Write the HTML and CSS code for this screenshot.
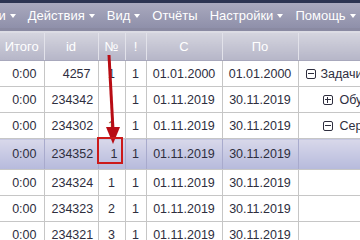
FILE: index.html
```html
<!DOCTYPE html>
<html>
<head>
    <title>Задачи</title>
    <link rel="stylesheet" href="styles.css">
</head>
<body>
    <div class="topline"></div>
    <nav class="menu">
        <span class="menu-item first">Справочники <i class="caret"></i></span>
        <span class="menu-item">Действия <i class="caret"></i></span>
        <span class="menu-item">Вид <i class="caret"></i></span>
        <span class="menu-item">Отчёты</span>
        <span class="menu-item">Настройки <i class="caret"></i></span>
        <span class="menu-item">Помощь <i class="caret"></i></span>
    </nav>
    <div class="menu-gap"></div>

    <table class="grid">
        <colgroup>
            <col class="c-total">
            <col class="c-id">
            <col class="c-num">
            <col class="c-flag">
            <col class="c-date">
            <col class="c-date">
            <col class="c-tree">
        </colgroup>
        <thead>
            <tr>
                <th>Итого</th>
                <th>id</th>
                <th>№</th>
                <th>!</th>
                <th>С</th>
                <th>По</th>
                <th></th>
            </tr>
        </thead>
        <tbody>
            <tr>
                <td class="num">0:00</td>
                <td class="num">4257</td>
                <td class="mid">1</td>
                <td class="mid">1</td>
                <td class="mid">01.01.2000</td>
                <td class="mid">01.01.2000</td>
                <td class="tree"><span class="node"><i class="box minus"></i>Задачи</span></td>
            </tr>
            <tr>
                <td class="num">0:00</td>
                <td class="num">234342</td>
                <td class="mid"></td>
                <td class="mid">1</td>
                <td class="mid">01.11.2019</td>
                <td class="mid">30.11.2019</td>
                <td class="tree"><span class="node sub"><i class="box plus"></i>Обучение</span></td>
            </tr>
            <tr>
                <td class="num">0:00</td>
                <td class="num">234302</td>
                <td class="mid">1</td>
                <td class="mid">1</td>
                <td class="mid">01.11.2019</td>
                <td class="mid">30.11.2019</td>
                <td class="tree"><span class="node sub"><i class="box minus"></i>Сервис</span></td>
            </tr>
            <tr class="selected">
                <td class="num">0:00</td>
                <td class="num">234352</td>
                <td class="num">1</td>
                <td class="mid">1</td>
                <td class="mid">01.11.2019</td>
                <td class="mid">30.11.2019</td>
                <td></td>
            </tr>
            <tr>
                <td class="num">0:00</td>
                <td class="num">234324</td>
                <td class="mid">1</td>
                <td class="mid">1</td>
                <td class="mid">01.11.2019</td>
                <td class="mid">30.11.2019</td>
                <td></td>
            </tr>
            <tr>
                <td class="num">0:00</td>
                <td class="num">234323</td>
                <td class="mid">2</td>
                <td class="mid">1</td>
                <td class="mid">01.11.2019</td>
                <td class="mid">30.11.2019</td>
                <td></td>
            </tr>
            <tr>
                <td class="num">0:00</td>
                <td class="num">234321</td>
                <td class="mid">3</td>
                <td class="mid">1</td>
                <td class="mid">01.11.2019</td>
                <td class="mid">30.11.2019</td>
                <td></td>
            </tr>
        </tbody>
    </table>

    <!-- annotation drawn over the grid -->
    <svg class="marker" width="360" height="240" viewBox="0 0 360 240">
        <line x1="109" y1="55" x2="113" y2="130" stroke="#b80c14" stroke-width="3"/>
        <polygon points="106,127 120,127 113,144" fill="#b80c14"/>
        <rect x="98" y="138" width="24" height="25" fill="none" stroke="#cc1a1a" stroke-width="2"/>
    </svg>
</body>
</html>
```

FILE: styles.css
```css
body {
    margin: 0;
    width: 360px;
    height: 240px;
    overflow: hidden;
    position: relative;
    background: #fff;
    font-family: "Liberation Sans", Arial, sans-serif;
}
.topline {
    height: 3px;
    background: #2c3452;
}
.menu {
    display: flex;
    align-items: center;
    height: 25px;
    margin-left: -79px;
    background: linear-gradient(#a9a9be, #8f90aa);
    border-bottom: 3px solid #8a8aa2;
    white-space: nowrap;
}
.menu-item {
    display: flex;
    align-items: center;
    color: #fff;
    font-size: 13px;
    padding: 0 6px;
}
.caret {
    display: inline-block;
    margin-left: 4px;
    border-left: 3.5px solid transparent;
    border-right: 3.5px solid transparent;
    border-top: 4px solid #fff;
}
.menu-gap {
    height: 2px;
    background: #dcdce4;
}
.grid {
    border-collapse: collapse;
    table-layout: fixed;
    width: 380px;
    font-size: 12.5px;
    color: #2e2e3e;
}
.c-total { width: 44px; }
.c-id { width: 54px; }
.c-num { width: 27px; }
.c-flag { width: 21px; }
.c-date { width: 76px; }
.c-tree { width: 82px; }
.grid th {
    height: 27px;
    padding: 0;
    font-weight: normal;
    font-size: 13px;
    color: #fff;
    background: linear-gradient(#d4d4de, #b6b6c8);
    border-right: 1px solid #e2e2ea;
    border-bottom: 1px solid #a8a8bc;
}
.grid td {
    height: 25px;
    padding: 0 7px;
    border-right: 1px solid #c6c6c6;
    border-bottom: 1px solid #c6c6c6;
    white-space: nowrap;
    overflow: hidden;
}
.grid td.num {
    text-align: right;
}
.grid td.mid {
    text-align: center;
    padding: 0;
}
.grid tr.selected td {
    height: 30px;
    background: linear-gradient(#d8d8ea, #b6badc);
    border-right-color: #a8aacc;
}
.tree {
    padding-left: 10px;
}
.node {
    display: flex;
    align-items: center;
    gap: 5px;
}
.node.sub {
    padding-left: 17px;
    gap: 7px;
}
.box {
    position: relative;
    width: 8px;
    height: 8px;
    border: 1.5px solid #2e2e3e;
    border-radius: 2px;
    flex: none;
}
.box::before {
    content: "";
    position: absolute;
    left: 1px;
    right: 1px;
    top: 3.25px;
    height: 1.5px;
    background: #2e2e3e;
}
.box.plus::after {
    content: "";
    position: absolute;
    top: 1px;
    bottom: 1px;
    left: 3.25px;
    width: 1.5px;
    background: #2e2e3e;
}
.marker {
    position: absolute;
    left: 0;
    top: 0;
    pointer-events: none;
}
```
